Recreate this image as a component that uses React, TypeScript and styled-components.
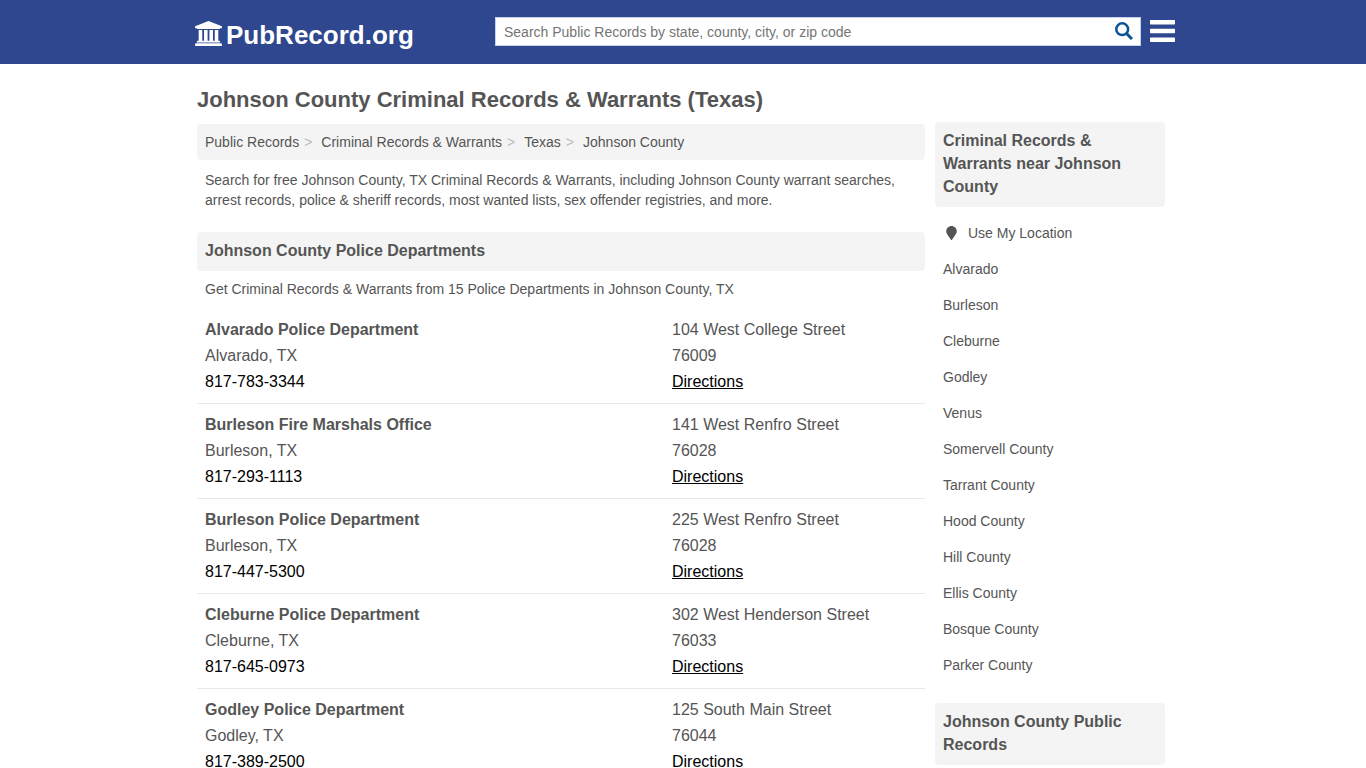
import React from "react";
import styled, { createGlobalStyle } from "styled-components";
import { FaMapMarker } from "react-icons/fa";

const GlobalStyle = createGlobalStyle`
  *, *::before, *::after { box-sizing: border-box; }
  body {
    margin: 0;
    background: #fff;
    color: #555;
    font-family: "Liberation Sans", Arial, sans-serif;
    font-size: 14px;
    line-height: 20px;
  }
  h1, h2, h3, p, ul, ol { margin: 0; padding: 0; }
  ul, ol { list-style: none; }
  a { color: inherit; text-decoration: none; }
`;

const Header = styled.header`
  background: #2e478f;
`;

const HeaderInner = styled.div`
  display: flex;
  align-items: center;
  max-width: 984px;
  height: 64px;
  margin: 0 auto;
  padding: 0 0 2px 4px;
`;

const Logo = styled.a`
  display: flex;
  align-items: center;
  gap: 4px;
  flex: 1;
  padding-top: 8px;
  color: #fff;
  font-size: 26px;
  font-weight: 700;
  line-height: 32px;

  svg { margin-bottom: 3px; }
`;

const SearchForm = styled.form`
  display: flex;
  flex: 0 1 646px;
  height: 29px;
  margin-right: 9px;
  background: #fff;
  border: 1px solid #c5d3ea;
`;

const SearchInput = styled.input`
  flex: 1;
  min-width: 0;
  padding: 2px 8px 0;
  border: 0;
  outline: 0;
  background: transparent;
  color: #555;
  font: inherit;

  &::placeholder { color: #757575; opacity: 1; }
`;

const IconButton = styled.button<{ $width: number }>`
  display: flex;
  align-items: center;
  justify-content: center;
  width: ${(p) => p.$width}px;
  padding: 0;
  border: 0;
  background: transparent;
  cursor: pointer;
`;

const Page = styled.div`
  display: flex;
  align-items: flex-start;
  gap: 10px;
  max-width: 980px;
  margin: 0 auto;
  padding: 0 8px 0 4px;
`;

const Main = styled.main`
  flex: 1;
  min-width: 0;
`;

const Title = styled.h1`
  padding: 24px 0 12px;
  font-size: 22px;
  line-height: 24px;
`;

const Breadcrumb = styled.ol`
  display: flex;
  padding: 8px;
  border-radius: 4px;
  background: #f4f4f4;

  li + li::before {
    content: ">";
    padding: 0 9px 0 5px;
    color: #bbb;
  }
`;

const Text = styled.p`
  padding: 10px 8px;
`;

const Summary = styled.p`
  padding: 8px 8px 10px;
`;

const SectionTitle = styled.h2<{ $spaced?: boolean }>`
  margin-top: ${(p) => (p.$spaced ? 12 : 0)}px;
  padding: 7px 8px 9px;
  border-radius: 4px;
  background: #f4f4f4;
  font-size: 16px;
  line-height: 23px;
`;

const Row = styled.li`
  display: flex;
  padding: 8px;
  border-bottom: 1px solid #e8e8e8;
  font-size: 16px;
  line-height: 26px;
`;

const Column = styled.div<{ $grow: number }>`
  display: flex;
  flex-direction: column;
  align-items: flex-start;
  flex: ${(p) => p.$grow} 1 0;
`;

const Phone = styled.a`
  color: #000;
`;

const Directions = styled.a`
  color: #000;
  text-decoration: underline;
`;

const Aside = styled.aside`
  flex: 0 0 230px;
  padding-top: 58px;
`;

const PlaceList = styled.ul`
  padding: 8px 0 20px;
`;

const PlaceLink = styled.a`
  display: flex;
  align-items: center;
  gap: 8px;
  padding: 8px;

  svg { width: 17px; }
`;

const departments = [
  ["Alvarado Police Department", "Alvarado, TX", "817-783-3344", "104 West College Street", "76009"],
  ["Burleson Fire Marshals Office", "Burleson, TX", "817-293-1113", "141 West Renfro Street", "76028"],
  ["Burleson Police Department", "Burleson, TX", "817-447-5300", "225 West Renfro Street", "76028"],
  ["Cleburne Police Department", "Cleburne, TX", "817-645-0973", "302 West Henderson Street", "76033"],
  ["Godley Police Department", "Godley, TX", "817-389-2500", "125 South Main Street", "76044"],
];

const places = [
  "Alvarado", "Burleson", "Cleburne", "Godley", "Venus", "Somervell County",
  "Tarrant County", "Hood County", "Hill County", "Ellis County", "Bosque County", "Parker County",
];

const crumbs = ["Public Records", "Criminal Records & Warrants", "Texas", "Johnson County"];

const BankIcon = () => (
  <svg width="27" height="25" viewBox="0 0 1920 1792" fill="#fff" aria-hidden="true">
    <path d="M960 0l960 384v128h-128q0 26-20.500 45t-48.500 19H197q-28 0-48.500-19T128 512H0V384zM256 640h256v768h128V640h256v768h128V640h256v768h128V640h256v768h59q28 0 48.500 19t20.500 45v64H128v-64q0-26 20.500-45t48.500-19h59zm1595 960q28 0 48.500 19t20.500 45v128H0v-128q0-26 20.500-45T69 1600z" />
  </svg>
);

const SearchIcon = () => (
  <svg width="18" height="18" viewBox="0 0 18 18" fill="none" stroke="#0b5394" aria-hidden="true">
    <circle cx="7.200" cy="7.200" r="5.900" strokeWidth="2.500" />
    <path d="M11.500 11.500 17 17" strokeWidth="3" />
  </svg>
);

const MenuIcon = () => (
  <svg width="25" height="22" viewBox="0 0 25 22" fill="#fff" aria-hidden="true">
    <path d="M.5 0h24l.5.500v3.500l-.5.500H.5L0 4V.5zM.5 8.700h24l.5.500v3.500l-.5.500H.5L0 12.700V9.200zM.5 17.500h24l.5.500v3.500l-.5.500H.5L0 21.500V18z" />
  </svg>
);

export default function App() {
  return (
    <>
      <GlobalStyle />
      <Header>
        <HeaderInner>
          <Logo href="#">
            <BankIcon />
            PubRecord.org
          </Logo>
          <SearchForm role="search">
            <SearchInput
              type="text"
              aria-label="Search public records"
              placeholder="Search Public Records by state, county, city, or zip code"
            />
            <IconButton type="submit" aria-label="Search" $width={32}>
              <SearchIcon />
            </IconButton>
          </SearchForm>
          <IconButton type="button" aria-label="Menu" $width={25}>
            <MenuIcon />
          </IconButton>
        </HeaderInner>
      </Header>
      <Page>
        <Main>
          <Title>Johnson County Criminal Records &amp; Warrants (Texas)</Title>
          <nav aria-label="Breadcrumb">
            <Breadcrumb>
              {crumbs.map((c) => (
                <li key={c}><a href="#">{c}</a></li>
              ))}
            </Breadcrumb>
          </nav>
          <Text>
            Search for free Johnson County, TX Criminal Records &amp; Warrants, including Johnson County
            warrant searches, arrest records, police &amp; sheriff records, most wanted lists, sex
            offender registries, and more.
          </Text>
          <SectionTitle $spaced>Johnson County Police Departments</SectionTitle>
          <Summary>
            Get Criminal Records &amp; Warrants from 15 Police Departments in Johnson County, TX
          </Summary>
          <ul>
            {departments.map(([name, city, phone, street, zip]) => (
              <Row key={name}>
                <Column $grow={467}>
                  <a href="#"><strong>{name}</strong></a>
                  <span>{city}</span>
                  <Phone href={`tel:${phone}`}>{phone}</Phone>
                </Column>
                <Column $grow={245}>
                  <span>{street}</span>
                  <span>{zip}</span>
                  <Directions href="#">Directions</Directions>
                </Column>
              </Row>
            ))}
          </ul>
        </Main>
        <Aside>
          <SectionTitle>Criminal Records &amp; Warrants near Johnson County</SectionTitle>
          <PlaceList>
            <li>
              <PlaceLink href="#">
                <FaMapMarker size={14} aria-hidden="true" />
                Use My Location
              </PlaceLink>
            </li>
            {places.map((p) => (
              <li key={p}><PlaceLink href="#">{p}</PlaceLink></li>
            ))}
          </PlaceList>
          <SectionTitle>Johnson County Public Records</SectionTitle>
        </Aside>
      </Page>
    </>
  );
}
